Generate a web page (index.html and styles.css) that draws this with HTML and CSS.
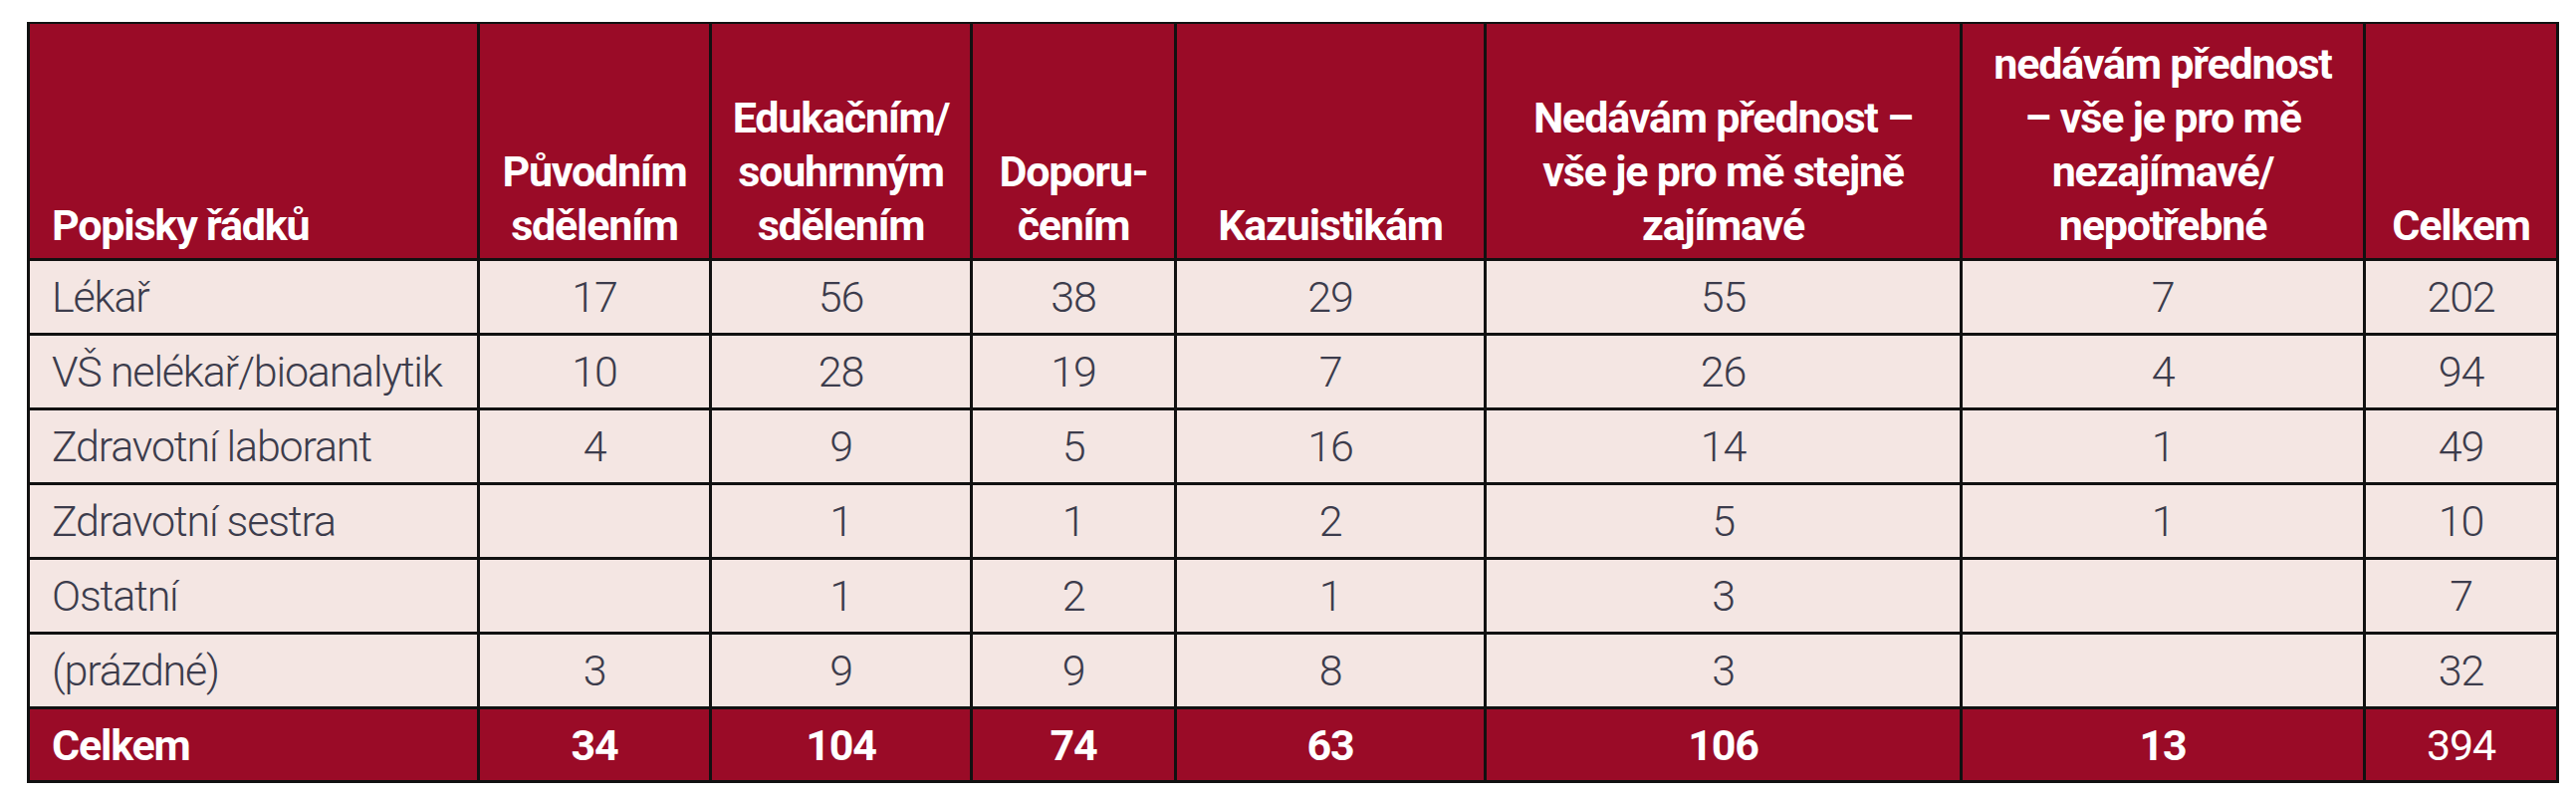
FILE: index.html
```html
<!DOCTYPE html>
<html lang="cs">
<head>
<meta charset="utf-8">
<title>Tabulka</title>
<link rel="stylesheet" href="styles.css">
</head>
<body>
<table class="data">
  <colgroup>
    <col class="c1"><col class="c2"><col class="c3"><col class="c4"><col class="c5"><col class="c6"><col class="c7"><col class="c8">
  </colgroup>
  <thead>
    <tr class="head">
      <th class="first">Popisky řádků</th>
      <th>Původním<br>sdělením</th>
      <th>Edukačním/<br>souhrnným<br>sdělením</th>
      <th>Doporu-<br>čením</th>
      <th>Kazuistikám</th>
      <th>Nedávám přednost –<br>vše je pro mě stejně<br>zajímavé</th>
      <th>nedávám přednost<br>– vše je pro mě<br>nezajímavé/<br>nepotřebné</th>
      <th>Celkem</th>
    </tr>
  </thead>
  <tbody>
    <tr><td class="first">Lékař</td><td>17</td><td>56</td><td>38</td><td>29</td><td>55</td><td>7</td><td>202</td></tr>
    <tr><td class="first">VŠ nelékař/bioanalytik</td><td>10</td><td>28</td><td>19</td><td>7</td><td>26</td><td>4</td><td>94</td></tr>
    <tr><td class="first">Zdravotní laborant</td><td>4</td><td>9</td><td>5</td><td>16</td><td>14</td><td>1</td><td>49</td></tr>
    <tr><td class="first">Zdravotní sestra</td><td></td><td>1</td><td>1</td><td>2</td><td>5</td><td>1</td><td>10</td></tr>
    <tr><td class="first">Ostatní</td><td></td><td>1</td><td>2</td><td>1</td><td>3</td><td></td><td>7</td></tr>
    <tr><td class="first">(prázdné)</td><td>3</td><td>9</td><td>9</td><td>8</td><td>3</td><td></td><td>32</td></tr>
  </tbody>
  <tfoot>
    <tr class="total"><td class="first">Celkem</td><td>34</td><td>104</td><td>74</td><td>63</td><td>106</td><td>13</td><td class="grand">394</td></tr>
  </tfoot>
</table>
</body>
</html>
```

FILE: styles.css
```css
html, body {
  margin: 0;
  padding: 0;
  background: #ffffff;
}

body {
  padding: 22px 0 0 27px;
  font-family: Roboto, "Liberation Sans", sans-serif;
}

.data {
  border-collapse: collapse;
  table-layout: fixed;
  width: 2540px;
  font-size: 43px;
  letter-spacing: -1.2px;
}

.c1 { width: 452px; }
.c2 { width: 233px; }
.c3 { width: 262px; }
.c4 { width: 205px; }
.c5 { width: 311px; }
.c6 { width: 478px; }
.c7 { width: 405px; }
.c8 { width: 194px; }

.data th,
.data td {
  border: 3px solid #111111;
  padding: 0 8px;
  text-align: center;
}

.data thead th {
  border-top-width: 2px;
}

.head th {
  height: 229px;
  background: #9a0b27;
  color: #ffffff;
  font-weight: 700;
  line-height: 54px;
  vertical-align: bottom;
  padding-bottom: 6px;
}

.data .first {
  text-align: left;
  padding-left: 22px;
}

tbody td {
  height: 72px;
  background: #f4e6e3;
  color: #3c3c4c;
  font-weight: 300;
  vertical-align: middle;
}

.total td {
  height: 71px;
  background: #9a0b27;
  color: #ffffff;
  font-weight: 700;
}

.total .grand {
  font-weight: 400;
}
```
